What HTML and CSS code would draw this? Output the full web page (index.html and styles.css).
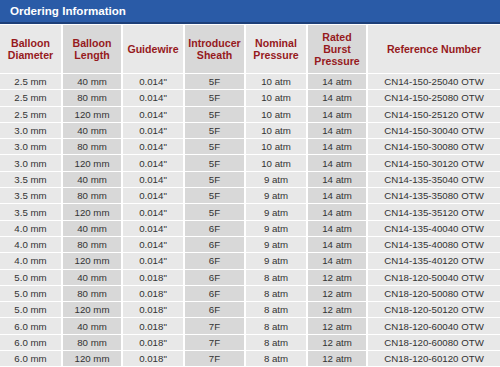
FILE: index.html
```html
<!DOCTYPE html>
<html>
<head>
<meta charset="utf-8">
<link rel="stylesheet" href="styles.css">
</head>
<body>
<div class="title">Ordering Information</div>
<div class="grid">
  <div class="hd">Balloon<br>Diameter</div>
  <div class="hd alt">Balloon<br>Length</div>
  <div class="hd">Guidewire</div>
  <div class="hd alt">Introducer<br>Sheath</div>
  <div class="hd">Nominal<br>Pressure</div>
  <div class="hd alt">Rated<br>Burst<br>Pressure</div>
  <div class="hd">Reference Number</div>

  <div>2.5 mm</div><div class="alt">40 mm</div><div>0.014"</div><div class="alt">5F</div><div>10 atm</div><div class="alt">14 atm</div><div>CN14-150-25040 OTW</div>
  <div>2.5 mm</div><div class="alt">80 mm</div><div>0.014"</div><div class="alt">5F</div><div>10 atm</div><div class="alt">14 atm</div><div>CN14-150-25080 OTW</div>
  <div>2.5 mm</div><div class="alt">120 mm</div><div>0.014"</div><div class="alt">5F</div><div>10 atm</div><div class="alt">14 atm</div><div>CN14-150-25120 OTW</div>
  <div>3.0 mm</div><div class="alt">40 mm</div><div>0.014"</div><div class="alt">5F</div><div>10 atm</div><div class="alt">14 atm</div><div>CN14-150-30040 OTW</div>
  <div>3.0 mm</div><div class="alt">80 mm</div><div>0.014"</div><div class="alt">5F</div><div>10 atm</div><div class="alt">14 atm</div><div>CN14-150-30080 OTW</div>
  <div>3.0 mm</div><div class="alt">120 mm</div><div>0.014"</div><div class="alt">5F</div><div>10 atm</div><div class="alt">14 atm</div><div>CN14-150-30120 OTW</div>
  <div>3.5 mm</div><div class="alt">40 mm</div><div>0.014"</div><div class="alt">5F</div><div>9 atm</div><div class="alt">14 atm</div><div>CN14-135-35040 OTW</div>
  <div>3.5 mm</div><div class="alt">80 mm</div><div>0.014"</div><div class="alt">5F</div><div>9 atm</div><div class="alt">14 atm</div><div>CN14-135-35080 OTW</div>
  <div>3.5 mm</div><div class="alt">120 mm</div><div>0.014"</div><div class="alt">5F</div><div>9 atm</div><div class="alt">14 atm</div><div>CN14-135-35120 OTW</div>
  <div>4.0 mm</div><div class="alt">40 mm</div><div>0.014"</div><div class="alt">6F</div><div>9 atm</div><div class="alt">14 atm</div><div>CN14-135-40040 OTW</div>
  <div>4.0 mm</div><div class="alt">80 mm</div><div>0.014"</div><div class="alt">6F</div><div>9 atm</div><div class="alt">14 atm</div><div>CN14-135-40080 OTW</div>
  <div>4.0 mm</div><div class="alt">120 mm</div><div>0.014"</div><div class="alt">6F</div><div>9 atm</div><div class="alt">14 atm</div><div>CN14-135-40120 OTW</div>
  <div>5.0 mm</div><div class="alt">40 mm</div><div>0.018"</div><div class="alt">6F</div><div>8 atm</div><div class="alt">12 atm</div><div>CN18-120-50040 OTW</div>
  <div>5.0 mm</div><div class="alt">80 mm</div><div>0.018"</div><div class="alt">6F</div><div>8 atm</div><div class="alt">12 atm</div><div>CN18-120-50080 OTW</div>
  <div>5.0 mm</div><div class="alt">120 mm</div><div>0.018"</div><div class="alt">6F</div><div>8 atm</div><div class="alt">12 atm</div><div>CN18-120-50120 OTW</div>
  <div>6.0 mm</div><div class="alt">40 mm</div><div>0.018"</div><div class="alt">7F</div><div>8 atm</div><div class="alt">12 atm</div><div>CN18-120-60040 OTW</div>
  <div>6.0 mm</div><div class="alt">80 mm</div><div>0.018"</div><div class="alt">7F</div><div>8 atm</div><div class="alt">12 atm</div><div>CN18-120-60080 OTW</div>
  <div>6.0 mm</div><div class="alt">120 mm</div><div>0.018"</div><div class="alt">7F</div><div>8 atm</div><div class="alt">12 atm</div><div>CN18-120-60120 OTW</div>
</div>
</body>
</html>
```
FILE: styles.css
```css
html, body {
  margin: 0;
  padding: 0;
  background: #ffffff;
  font-family: "Liberation Sans", Arial, sans-serif;
  overflow: hidden;
}
.title {
  height: 22px;
  background: #2a5ba7;
  border-bottom: 2px solid #1d3f78;
  color: #ffffff;
  font-weight: bold;
  font-size: 11.6px;
  line-height: 22px;
  padding-left: 10px;
}
.grid {
  margin-top: 1px;
  display: grid;
  grid-template-columns: 61px 58px 60px 59px 60px 58px 132px;
  grid-template-rows: 48px;
  grid-auto-rows: 15.3px;
  column-gap: 2px;
  row-gap: 1px;
  background: #ffffff;
}
.grid > div {
  background: #e8e8e8;
  color: #333333;
  font-size: 9.7px;
  display: flex;
  align-items: center;
  justify-content: center;
  text-align: center;
}
.grid > div.alt {
  background: #d8d8d8;
}
.grid > div.hd {
  color: #961a1d;
  font-weight: bold;
  font-size: 10.6px;
  line-height: 12px;
}
```
